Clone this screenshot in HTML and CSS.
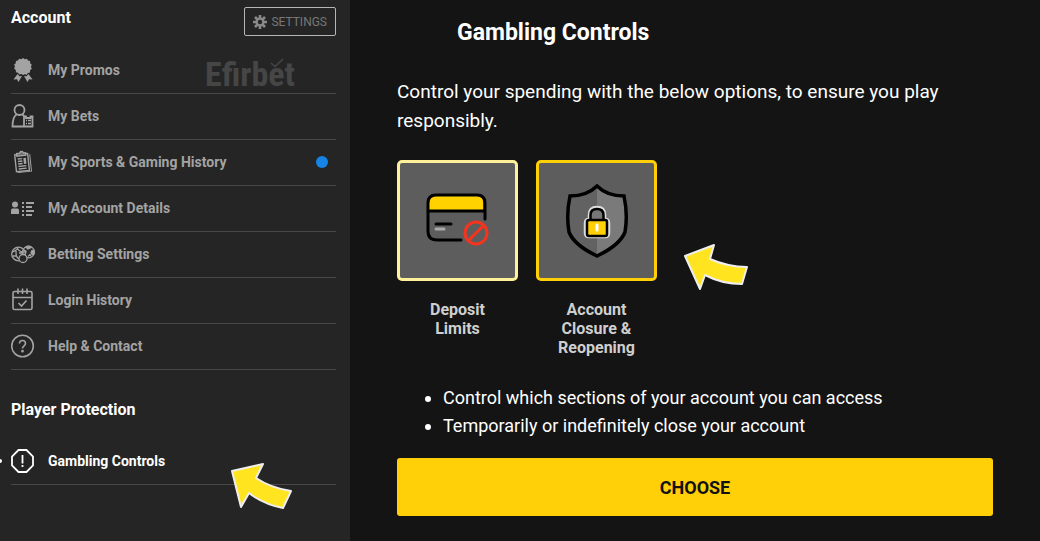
FILE: index.html
```
<!DOCTYPE html>
<html lang="en">
<head>
    <meta charset="UTF-8">
    <meta name="viewport" content="width=device-width, initial-scale=1.0">
    <title>Gambling Controls</title>
    <link rel="stylesheet" href="styles.css">
</head>
<body>
    <div class="page">
        <aside class="sidebar">
            <div class="sidebar-header">
                <h2>Account</h2>
                <button class="settings-button" type="button">
                    <svg width="14" height="14" viewBox="0 0 14 14">
                        <g stroke="#8a8a8a" stroke-width="2.6">
                            <path d="M7 0v14M0 7h14M2 2l10 10M12 2L2 12"/>
                        </g>
                        <circle cx="7" cy="7" r="4.6" fill="#8a8a8a"/>
                        <circle cx="7" cy="7" r="2.2" fill="#252525"/>
                    </svg>
                    SETTINGS
                </button>
            </div>

            <nav>
                <ul class="menu">
                    <li>
                        <a href="#promos">
                            <svg width="24" height="24" viewBox="0 0 24 24" fill="#a3a3a3">
                                <path d="M12 0l1.8 1.2 2.1-.5 1.1 1.9 2.1.5.1 2.2 1.6 1.5-.9 2 .9 2-1.7 1.4-.1 2.2-2.1.5-1.1 1.8-2.1-.5L12 17l-1.8-1-2.1.5L7 14.7l-2.1-.5-.1-2.2-1.7-1.4.9-2-.9-2 1.7-1.3.1-2.2L7 2.6 8.1.7l2.1.5z"/>
                                <path d="M6.500 16L2.500 21.500l3.500-.2L7.500 24l3.500-6-2.500.2z"/>
                                <path d="M17.500 16l4 5.500-3.500-.2-1.500 2.700-3.500-6 2.500.2z"/>
                            </svg>
                            <span>My Promos</span>
                        </a>
                        <div class="watermark">Efirbet
                            <svg width="14" height="10" viewBox="0 0 14 10" fill="none" stroke="#464646" stroke-width="1.6"><path d="M1 5l4 3.500L13 1"/></svg>
                        </div>
                    </li>
                    <li>
                        <a href="#bets">
                            <svg width="24" height="24" viewBox="0 0 24 24" fill="none" stroke="#a3a3a3" stroke-width="1.8">
                                <circle cx="8.5" cy="6" r="5"/>
                                <path d="M5.500 10.500C2.500 12.500 1.500 16 1.500 22.500h20V12.500h-2v1.500h-4.500v-1.500h-2v10M11.500 10.500l2 2"/>
                                <path d="M15 16.500h1M17 16.500h3M15 19.500h1M17 19.500h3" stroke-width="1.5"/>
                            </svg>
                            <span>My Bets</span>
                        </a>
                    </li>
                    <li>
                        <a href="#history">
                            <svg width="24" height="24" viewBox="0 0 24 24" fill="none" stroke="#a3a3a3" stroke-width="1.4">
                                <g transform="rotate(-6 12 12)">
                                    <path d="M6.500 4H4.500v17h13V4h-2"/>
                                    <path d="M6.500 5.500V3h3l1-1.500h2l1 1.500h2v2.500z" fill="#6d6d6d"/>
                                    <path d="M7 8.500h4.500M7 11h4.500M7 13.500h4.500M7 16h8M7 18.500h8"/>
                                    <path d="M14 8v6" stroke-width="2.5"/>
                                    <path d="M19.500 5v17H6" stroke-width="1"/>
                                </g>
                            </svg>
                            <span>My Sports &amp; Gaming History</span>
                            <i class="dot"></i>
                        </a>
                    </li>
                    <li>
                        <a href="#details">
                            <svg width="24" height="24" viewBox="0 0 24 24" fill="#a3a3a3">
                                <circle cx="4" cy="8.5" r="3"/>
                                <path d="M0 18v-3.500C0 13 1 12.500 2 12.500h4c1 0 2 .5 2 2V18z"/>
                                <path d="M11 6h2v2h-2zM15 6h8v2h-8zM11 10h2v2h-2zM15 10h6v2h-6zM11 14h2v2h-2zM15 14h8v2h-8zM11 18h2v2h-2zM15 18h6v2h-6z"/>
                            </svg>
                            <span>My Account Details</span>
                        </a>
                    </li>
                    <li>
                        <a href="#betting">
                            <svg width="24" height="24" viewBox="0 0 24 24" fill="none" stroke="#a3a3a3" stroke-width="1.3">
                                <circle cx="7.5" cy="12" r="6.8"/>
                                <path d="M1 10c4-1 5-2 6-4.500M7 7c1 2 3 3 6 3M5 9c0 4 0 6 3 8M1.500 14l4 0M8 11l4 0"/>
                                <circle cx="17.5" cy="10" r="5.8"/>
                                <path d="M15 5.500l2 1.500 3-1.500-1-1h-3zM21 8.500l2 .5v3l-2 .5-1-2zM13 8l2 1-.5 3" fill="#a3a3a3"/>
                                <circle cx="12" cy="16.5" r="4" fill="#252525"/>
                                <path d="M17 14.500l2-2 1 2"/>
                            </svg>
                            <span>Betting Settings</span>
                        </a>
                    </li>
                    <li>
                        <a href="#login">
                            <svg width="24" height="24" viewBox="0 0 24 24" fill="none" stroke="#a3a3a3" stroke-width="1.6">
                                <rect x="2" y="3.5" width="19" height="18" rx="1.5"/>
                                <path d="M2 9.500h19M7 .5v5.500M11.500 .5v5.500M16 .5v5.500M7.500 15l3 3 5-5.500"/>
                            </svg>
                            <span>Login History</span>
                        </a>
                    </li>
                    <li>
                        <a href="#help">
                            <svg width="24" height="24" viewBox="0 0 24 24" fill="none" stroke="#a3a3a3" stroke-width="1.6">
                                <circle cx="11.5" cy="12" r="10.8"/>
                                <path d="M8.500 9.500c0-4 6-4 6 0 0 2.300-3 2.300-3 5"/>
                                <circle cx="11.5" cy="17.2" r=".6" fill="#a3a3a3"/>
                            </svg>
                            <span>Help &amp; Contact</span>
                        </a>
                    </li>
                </ul>

                <h2>Player Protection</h2>
                <ul class="menu protection">
                    <li>
                        <a class="active" href="#controls">
                            <svg width="24" height="24" viewBox="0 0 24 24" fill="none" stroke="#fff" stroke-width="1.8">
                                <path d="M7.500 1h8L22 7.500v9L15.500 23h-8L1 16.500v-9z"/>
                                <path d="M11.500 6v8.500M11.500 16v2"/>
                            </svg>
                            <span>Gambling Controls</span>
                        </a>
                        <svg class="arrow arrow-menu" width="64" height="50" viewBox="0 0 64 50">
                            <path d="M3 10L34 3l-7 14q15 10 35 13l-8 17q-20-4-34-15l-8 14z" fill="#ffe41f" stroke="#eee" stroke-width="2" stroke-linejoin="round"/>
                        </svg>
                    </li>
                </ul>
            </nav>
        </aside>

        <main class="content">
            <h1>Gambling Controls</h1>
            <p class="intro">Control your spending with the below options, to ensure you play responsibly.</p>

            <div class="options">
                <button class="option" type="button">
                    <span class="tile">
                        <svg width="64" height="64" viewBox="0 0 64 64" fill="none">
                            <path d="M3 22v-9q0-7 7-7h40q7 0 7 7v9z" fill="#ffd200"/>
                            <path d="M59 30V14q0-8-8-8H10Q2 6 2 14v28q0 9 9 9h24M2 22h57" stroke="#000" stroke-width="3" stroke-linecap="round"/>
                            <path d="M10 35h15" stroke="#000" stroke-width="3" stroke-linecap="round"/>
                            <path d="M10 40h8" stroke="#aaa" stroke-width="3" stroke-linecap="round"/>
                            <circle cx="50" cy="44" r="11" stroke="#f5341f" stroke-width="3"/>
                            <path d="M43 51l14-14" stroke="#f5341f" stroke-width="3"/>
                        </svg>
                    </span>
                    <span>Deposit Limits</span>
                </button>
                <button class="option selected" type="button">
                    <span class="tile">
                        <svg width="64" height="74" viewBox="0 0 64 74">
                            <path d="M32 2Q22 12 5 12 1 31 4 48 9 61 32 72z" fill="#626262"/>
                            <path d="M32 2q10 10 27 10 4 19 1 36-5 13-28 24z" fill="#7a7a7a"/>
                            <path d="M32 2Q22 12 5 12 1 31 4 48 9 61 32 72 55 61 60 48 63 31 59 12 42 12 32 2z" fill="none" stroke="#000" stroke-width="3.5"/>
                            <path d="M25 36v-5q0-7 7-7t7 7v5M24 36h16q3 0 3 3v10q0 3-3 3H24q-3 0-3-3V39q0-3 3-3z" fill="none" stroke="#ddd" stroke-width="4.5"/>
                            <path d="M25.500 36v-5q0-6 6.500-6t6.500 6v5" fill="#777" stroke="#000" stroke-width="2.5"/>
                            <rect x="22" y="36" width="20" height="16" rx="2" fill="#ffcf08" stroke="#000" stroke-width="2.5"/>
                            <path d="M32 41v5" stroke="#fff" stroke-width="3" stroke-linecap="round"/>
                        </svg>
                    </span>
                    <span>Account Closure &amp; Reopening</span>
                </button>
                <svg class="arrow arrow-option" width="66" height="50" viewBox="0 0 66 50">
                    <path d="M3 14L32 3l-4 14q18 8 37 8l-5 17q-20 0-37-9l-5 14z" fill="#ffe41f" stroke="#eee" stroke-width="2" stroke-linejoin="round"/>
                </svg>
            </div>

            <ul class="details">
                <li>Control which sections of your account you can access</li>
                <li>Temporarily or indefinitely close your account</li>
            </ul>

            <button class="choose-button" type="button">CHOOSE</button>
        </main>
    </div>
</body>
</html>
```
FILE: styles.css
```
* {
    box-sizing: border-box;
}

body {
    margin: 0;
    font-family: Roboto, "Liberation Sans", sans-serif;
    background-color: #141414;
    color: #fff;
}

h1, h2, p, ul {
    margin: 0;
    padding: 0;
}

button {
    font-family: inherit;
    cursor: pointer;
}

.page {
    display: flex;
    min-height: 100vh;
}

.sidebar {
    width: 350px;
    flex-shrink: 0;
    padding: 7px 14px 0 11px;
    background-color: #252525;
}

.sidebar-header {
    display: flex;
    justify-content: space-between;
    align-items: flex-start;
    height: 41px;
}

h2 {
    font-size: 16px;
    line-height: 21px;
    font-weight: 700;
}

.settings-button {
    display: flex;
    align-items: center;
    gap: 4px;
    height: 29px;
    padding: 0 8px;
    border: 1px solid #b5b5b5;
    border-radius: 2px;
    background: none;
    color: #777;
    font-size: 12px;
}

.menu {
    list-style: none;
}

.menu li {
    position: relative;
    border-bottom: 1px solid #484848;
}

.menu a {
    display: flex;
    align-items: center;
    gap: 13px;
    height: 45px;
    padding-bottom: 2px;
    color: #a3a3a3;
    font-size: 14px;
    font-weight: 700;
    text-decoration: none;
}

.menu .active {
    color: #fff;
}

.active::before {
    content: "";
    position: absolute;
    left: -13px;
    width: 4px;
    height: 4px;
    border-radius: 50%;
    background-color: #fff;
}

.dot {
    width: 12px;
    height: 12px;
    margin: 0 8px 0 auto;
    border-radius: 50%;
    background-color: #1683e6;
}

.watermark {
    position: absolute;
    top: 8px;
    right: 41px;
    color: #464646;
    font-family: "Liberation Sans Narrow", "Roboto Condensed", Roboto, sans-serif;
    font-size: 34px;
    line-height: 36px;
    font-weight: 700;
}

.watermark svg {
    position: absolute;
    top: 2px;
    right: 11px;
}

nav h2 {
    margin-top: 29px;
}

.protection {
    margin-top: 19px;
}

.arrow {
    position: absolute;
}

.arrow-menu {
    top: 22px;
    right: 43px;
}

.content {
    flex: 1;
    padding: 19px 47px 25px;
}

h1 {
    padding-left: 60px;
    font-size: 23px;
    line-height: 28px;
    font-weight: 700;
}

.intro {
    margin-top: 30px;
    font-size: 19px;
    line-height: 29px;
}

.options {
    position: relative;
    display: flex;
    align-items: flex-start;
    gap: 18px;
    margin-top: 25px;
}

.option {
    width: 121px;
    padding: 0;
    border: 0;
    background: none;
    color: #cfcfcf;
    font-size: 16px;
    line-height: 19px;
    font-weight: 700;
}

.option > span:last-child {
    display: block;
    margin-top: 19px;
    padding: 0 16px;
}

.tile {
    display: flex;
    justify-content: center;
    align-items: center;
    height: 121px;
    border: 3px solid #fff09a;
    border-radius: 5px;
    background-color: #5d5d5d;
}

.selected .tile {
    border-color: #ffcf08;
}

.arrow-option {
    top: 82px;
    left: 285px;
}

.details {
    margin-top: 27px;
    padding-left: 46px;
    font-size: 18px;
    line-height: 28px;
}

.choose-button {
    display: block;
    width: 100%;
    height: 58px;
    margin-top: 18px;
    border: 0;
    border-radius: 3px;
    background-color: #ffcf08;
    color: #111;
    font-size: 18px;
    font-weight: 700;
}
```
